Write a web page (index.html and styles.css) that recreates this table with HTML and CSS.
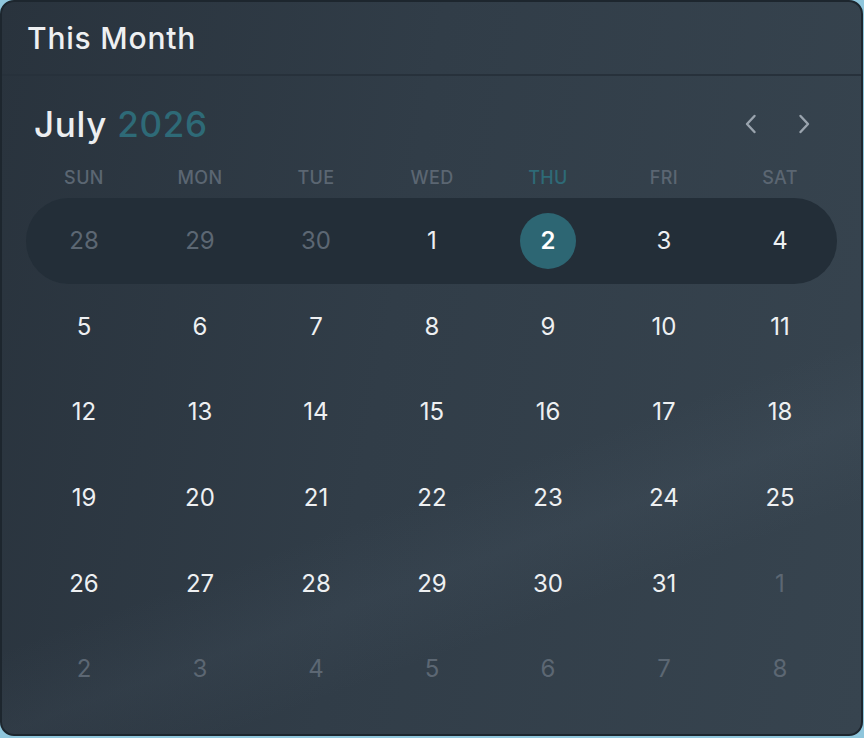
FILE: index.html
```html
<!DOCTYPE html>
<html lang="en">
<head>
<meta charset="utf-8">
<title>This Month</title>
<link rel="stylesheet" href="styles.css">
</head>
<body>
<div class="card">
  <div class="card-header">This Month</div>
  <div class="card-body">
    <div class="month-row">
      <div class="month-title">July <span class="year">2026</span></div>
      <div class="nav">
        <button class="nav-btn" aria-label="Previous month">
          <svg width="16" height="24" viewBox="0 0 16 24"><path d="M11.5 4 L4 12 L11.5 20" fill="none" stroke="#9aa4ae" stroke-width="2.4" stroke-linecap="round" stroke-linejoin="round"/></svg>
        </button>
        <button class="nav-btn" aria-label="Next month">
          <svg width="16" height="24" viewBox="0 0 16 24"><path d="M4.5 4 L12 12 L4.5 20" fill="none" stroke="#9aa4ae" stroke-width="2.4" stroke-linecap="round" stroke-linejoin="round"/></svg>
        </button>
      </div>
    </div>
    <div class="weekdays">
      <div>SUN</div><div>MON</div><div>TUE</div><div>WED</div><div class="today-col">THU</div><div>FRI</div><div>SAT</div>
    </div>
    <div class="days">
      <div class="week current">
        <div class="day muted">28</div>
        <div class="day muted">29</div>
        <div class="day muted">30</div>
        <div class="day">1</div>
        <div class="day"><span class="selected">2</span></div>
        <div class="day">3</div>
        <div class="day">4</div>
      </div>
      <div class="week">
        <div class="day">5</div><div class="day">6</div><div class="day">7</div><div class="day">8</div><div class="day">9</div><div class="day">10</div><div class="day">11</div>
      </div>
      <div class="week">
        <div class="day">12</div><div class="day">13</div><div class="day">14</div><div class="day">15</div><div class="day">16</div><div class="day">17</div><div class="day">18</div>
      </div>
      <div class="week">
        <div class="day">19</div><div class="day">20</div><div class="day">21</div><div class="day">22</div><div class="day">23</div><div class="day">24</div><div class="day">25</div>
      </div>
      <div class="week">
        <div class="day">26</div><div class="day">27</div><div class="day">28</div><div class="day">29</div><div class="day">30</div><div class="day">31</div><div class="day muted">1</div>
      </div>
      <div class="week">
        <div class="day muted">2</div><div class="day muted">3</div><div class="day muted">4</div><div class="day muted">5</div><div class="day muted">6</div><div class="day muted">7</div><div class="day muted">8</div>
      </div>
    </div>
  </div>
</div>
</body>
</html>
```

FILE: styles.css
```css
* { box-sizing: border-box; }

html, body {
  margin: 0;
  padding: 0;
}

body {
  background: #8fc6dc;
  font-family: Inter, "Noto Sans", "Liberation Sans", sans-serif;
  width: 864px;
  height: 738px;
  overflow: hidden;
}

.card {
  width: 863px;
  height: 736px;
  border: 2px solid #1d262e;
  border-radius: 14px;
  background:
    linear-gradient(160deg, rgba(255,255,255,0) 62%, rgba(120,140,160,0.06) 70%, rgba(255,255,255,0) 78%),
    linear-gradient(100deg, #29333d 0%, #313d48 45%, #37444f 100%);
  overflow: hidden;
  display: flex;
  flex-direction: column;
}

.card-header {
  height: 74px;
  padding: 0 25px;
  display: flex;
  align-items: center;
  font-size: 30px;
  font-weight: 500;
  color: #eef0f2;
  letter-spacing: 0.8px;
  border-bottom: 2px solid #27313b;
}

.card-body {
  padding: 0 24px;
  display: flex;
  flex-direction: column;
}

.month-row {
  margin-top: 26px;
  height: 44px;
  display: flex;
  align-items: center;
  justify-content: space-between;
  padding-left: 8px;
  padding-right: 25px;
}

.month-title {
  font-size: 35px;
  font-weight: 500;
  color: #eceef0;
  letter-spacing: 0.7px;
}

.year {
  color: #2e6a77;
}

.nav {
  display: flex;
  gap: 37px;
  align-items: center;
}

.nav-btn {
  background: none;
  border: 0;
  padding: 0;
  width: 16px;
  height: 24px;
  display: flex;
}

.weekdays {
  margin-top: 14px;
  height: 34px;
  display: grid;
  grid-template-columns: repeat(7, 116px);
  align-items: center;
  justify-items: center;
  font-size: 18px;
  font-weight: 500;
  color: #5b6672;
  letter-spacing: 0.4px;
}

.today-col {
  color: #2e6a77;
}

.days {
  margin-top: 4px;
  display: flex;
  flex-direction: column;
}

.week {
  height: 85.6px;
  display: grid;
  grid-template-columns: repeat(7, 116px);
  align-items: center;
  justify-items: center;
}

.week.current {
  background: #232e38;
  border-radius: 43px;
}

.day {
  font-size: 24px;
  font-weight: 400;
  color: #eef0f2;
  display: flex;
  align-items: center;
  justify-content: center;
}

.day.muted {
  color: #5c6773;
}

.selected {
  width: 56px;
  height: 56px;
  border-radius: 50%;
  background: #2d6673;
  color: #ffffff;
  font-weight: 600;
  display: flex;
  align-items: center;
  justify-content: center;
}
```
